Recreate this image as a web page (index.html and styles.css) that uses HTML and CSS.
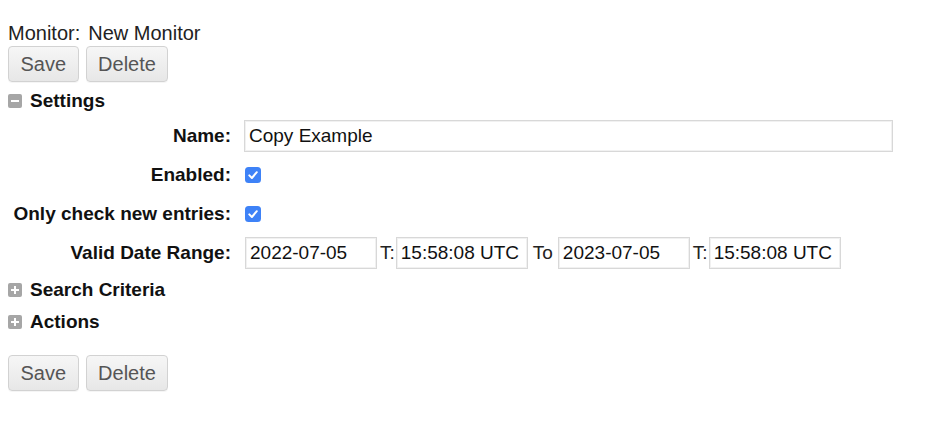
FILE: index.html
```html
<!DOCTYPE html>
<html>
<head>
<meta charset="utf-8">
<title>Monitor</title>
<link rel="stylesheet" href="styles.css">
</head>
<body>
<div class="page">
  <div class="header"><span class="header-label">Monitor:</span><span>New Monitor</span></div>
  <div class="toolbar">
    <button class="btn" type="button">Save</button>
    <button class="btn" type="button">Delete</button>
  </div>

  <div class="toggle toggle-first">
    <span class="toggle-icon"><svg width="14" height="14" viewBox="0 0 14 14"><rect x="3" y="6" width="8" height="2" fill="#fff"/></svg></span>
    <span class="toggle-text">Settings</span>
  </div>

  <div class="form">
    <label class="form-label">Name:</label>
    <div class="form-control"><input class="text-input name-input" type="text" value="Copy Example"></div>

    <label class="form-label">Enabled:</label>
    <div class="form-control"><span class="check"><svg width="16" height="16" viewBox="0 0 16 16"><rect x="0" y="0" width="16" height="16" rx="3.5" fill="#3e82f7"/><path d="M4.3 8.4 L6.9 11 L11.8 5.2" fill="none" stroke="#fff" stroke-width="2" stroke-linecap="round" stroke-linejoin="round"/></svg></span></div>

    <label class="form-label">Only check new entries:</label>
    <div class="form-control"><span class="check"><svg width="16" height="16" viewBox="0 0 16 16"><rect x="0" y="0" width="16" height="16" rx="3.5" fill="#3e82f7"/><path d="M4.3 8.4 L6.9 11 L11.8 5.2" fill="none" stroke="#fff" stroke-width="2" stroke-linecap="round" stroke-linejoin="round"/></svg></span></div>

    <label class="form-label">Valid Date Range:</label>
    <div class="form-control date-range">
      <input class="text-input date-input" type="text" value="2022-07-05">
      <span class="sep-t">T:</span>
      <input class="text-input date-input" type="text" value="15:58:08 UTC">
      <span class="sep-to">To</span>
      <input class="text-input date-input" type="text" value="2023-07-05">
      <span class="sep-t">T:</span>
      <input class="text-input date-input" type="text" value="15:58:08 UTC">
    </div>
  </div>

  <div class="toggle toggle-search">
    <span class="toggle-icon"><svg width="14" height="14" viewBox="0 0 14 14"><rect x="3" y="6" width="8" height="2" fill="#fff"/><rect x="6" y="3" width="2" height="8" fill="#fff"/></svg></span>
    <span class="toggle-text">Search Criteria</span>
  </div>
  <div class="toggle toggle-actions">
    <span class="toggle-icon"><svg width="14" height="14" viewBox="0 0 14 14"><rect x="3" y="6" width="8" height="2" fill="#fff"/><rect x="6" y="3" width="2" height="8" fill="#fff"/></svg></span>
    <span class="toggle-text">Actions</span>
  </div>

  <div class="toolbar toolbar-bottom">
    <button class="btn" type="button">Save</button>
    <button class="btn" type="button">Delete</button>
  </div>
</div>
</body>
</html>
```

FILE: styles.css
```css
html, body {
  margin: 0;
  padding: 0;
  background: #fff;
}

body {
  font-family: "Liberation Sans", Arial, Helvetica, sans-serif;
  font-size: 19px;
  color: #1a1a1a;
}

.page {
  padding: 21px 8px;
}

.header {
  height: 22px;
  line-height: 22px;
  font-size: 20px;
  color: #222;
  white-space: nowrap;
  padding-top: 1px;
}

.header-label {
  margin-right: 8px;
}

.toolbar {
  display: flex;
  gap: 7px;
  margin-top: 2px;
}

.btn {
  height: 36px;
  padding: 0 11.5px;
  font-family: "Liberation Sans", Arial, Helvetica, sans-serif;
  font-size: 20px;
  color: #555;
  background: linear-gradient(#f6f6f6, #e7e7e7);
  border: 1px solid #d2d2d2;
  border-radius: 4px;
  box-shadow: 0 1px 0 rgba(0,0,0,0.04);
}

.toggle {
  display: flex;
  align-items: center;
  gap: 8px;
  height: 22px;
}

.toggle-first {
  margin-top: 8px;
}

.toggle-search {
  margin-top: 10px;
}

.toggle-actions {
  margin-top: 10px;
}

.toggle-icon {
  display: flex;
  width: 14px;
  height: 14px;
  background: #a6a6a6;
  border-radius: 2px;
}

.toggle-text {
  font-weight: bold;
  color: #111;
}

.form {
  display: grid;
  grid-template-columns: 223px 1fr;
  column-gap: 13px;
  row-gap: 7px;
  margin-top: 8px;
  grid-auto-rows: 32px;
  align-items: center;
}

.form-label {
  text-align: right;
  font-weight: bold;
  color: #111;
  white-space: nowrap;
}

.form-control {
  display: flex;
  align-items: center;
  height: 32px;
}

.text-input {
  box-sizing: border-box;
  height: 32px;
  padding: 0 4px;
  font-family: "Liberation Sans", Arial, Helvetica, sans-serif;
  font-size: 19px;
  color: #111;
  background: #fff;
  border: 1px solid #d8d8d8;
  box-shadow: inset 0 0 0 1px #f1f1f1;
  outline: none;
}

.name-input {
  width: 649px;
}

.check {
  display: flex;
  margin-left: 1px;
}

.date-range {
  white-space: nowrap;
}

.date-input {
  width: 132px;
}

.date-range .date-input:first-child {
  margin-left: 1px;
}

.sep-t {
  margin: 0 1px 0 3px;
  color: #222;
}

.sep-to {
  margin: 0 5px 0 5px;
  color: #222;
}

.toolbar-bottom {
  margin-top: 22px;
}
```
